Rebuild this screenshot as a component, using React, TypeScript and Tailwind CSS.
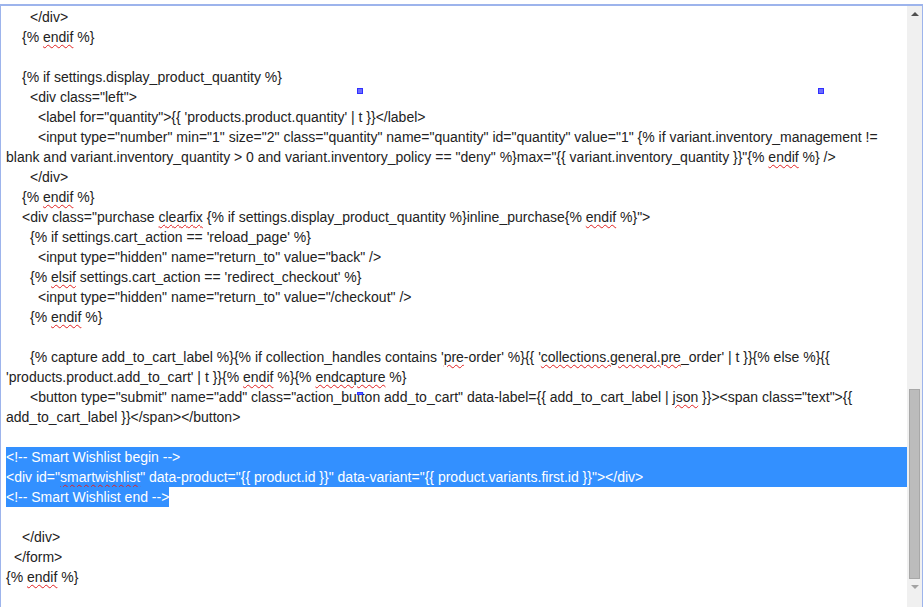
import React from "react";

const W = ({ children }: { children: React.ReactNode }) => (
  <span className="underline decoration-wavy decoration-[#e02020] decoration-1 underline-offset-2">{children}</span>
);

type L = { i: number; c?: React.ReactNode; sel?: "full" | "text" };

const lines: L[] = [
  { i: 30, c: "</div>" },
  { i: 22, c: <>{"{% "}<W>endif</W>{" %}"}</> },
  { i: 0 },
  { i: 22, c: "{% if settings.display_product_quantity %}" },
  { i: 30, c: '<div class="left">' },
  { i: 38, c: "<label for=\"quantity\">{{ 'products.product.quantity' | t }}</label>" },
  { i: 38, c: '<input type="number" min="1" size="2" class="quantity" name="quantity" id="quantity" value="1" {% if variant.inventory_management !=' },
  { i: 6, c: <>{'blank and variant.inventory_quantity > 0 and variant.inventory_policy == "deny" %}max="{{ variant.inventory_quantity }}"{% '}<W>endif</W>{" %} />"}</> },
  { i: 30, c: "</div>" },
  { i: 22, c: <>{"{% "}<W>endif</W>{" %}"}</> },
  { i: 22, c: <>{'<div class="purchase '}<W>clearfix</W>{' {% if settings.display_product_quantity %}inline_purchase{% '}<W>endif</W>{' %}">'}</> },
  { i: 30, c: "{% if settings.cart_action == 'reload_page' %}" },
  { i: 38, c: '<input type="hidden" name="return_to" value="back" />' },
  { i: 30, c: <>{"{% "}<W>elsif</W>{" settings.cart_action == 'redirect_checkout' %}"}</> },
  { i: 38, c: '<input type="hidden" name="return_to" value="/checkout" />' },
  { i: 30, c: <>{"{% "}<W>endif</W>{" %}"}</> },
  { i: 0 },
  { i: 30, c: <>{"{% capture add_to_cart_label %}{% if collection_handles contains '"}<W>pre</W>{"-order' %}{{ '"}<W>collections.general.pre</W>{"_order' | t }}{% else %}{{"}</> },
  { i: 6, c: <>{"'products.product.add_to_cart' | t }}{% "}<W>endif</W>{" %}{% "}<W>endcapture</W>{" %}"}</> },
  { i: 30, c: <>{'<button type="submit" name="add" class="action_button add_to_cart" data-label={{ add_to_cart_label | '}<W>json</W>{' }}><span class="text">{{'}</> },
  { i: 6, c: "add_to_cart_label }}</span></button>" },
  { i: 0 },
  { i: 6, c: "<!-- Smart Wishlist begin -->", sel: "full" },
  { i: 6, c: <>{'<div id="'}<W>smartwishlist</W>{'" data-product="{{ product.id }}" data-variant="{{ product.variants.first.id }}"></div>'}</>, sel: "full" },
  { i: 6, c: "<!-- Smart Wishlist end -->", sel: "text" },
  { i: 0 },
  { i: 22, c: "</div>" },
  { i: 14, c: "</form>" },
  { i: 6, c: <>{"{% "}<W>endif</W>{" %}"}</> },
];

export default function App() {
  return (
    <div className="w-[923px] h-[607px] bg-white pt-[4px] overflow-hidden" style={{ fontFamily: '"Liberation Sans", Arial, sans-serif' }}>
      <div className="relative flex h-[603px] border-t-[2px] border-l border-r border-[#9db4ec]">
        <div className="flex-1 pt-[1px] text-[14px] leading-[20px] text-[#222]">
          {lines.map((l, k) => (
            <div key={k} className="h-[20px] whitespace-pre" style={{ paddingLeft: l.sel === "full" ? 5 : l.sel ? 5 : Math.max(l.i - 1, 0) }}>
              {l.sel === "full" ? (
                <div className="-ml-[0px] bg-[#3390ff] text-white h-[20px]">{l.c}</div>
              ) : l.sel === "text" ? (
                <span className="inline-block bg-[#3390ff] text-white h-[20px]">{l.c}</span>
              ) : (
                l.c ?? "\u00a0"
              )}
            </div>
          ))}
        </div>
        <div className="w-[15px] bg-[#f0f0f0] flex flex-col items-center">
          <div className="h-[16px] flex items-center justify-center">
            <div className="w-0 h-0 border-l-[4px] border-r-[4px] border-b-[4px] border-l-transparent border-r-transparent border-b-[#505050]" />
          </div>
          <div className="mt-[367px] w-[11px] h-[190px] bg-[#bcbcbc] border border-[#a8a8a8]" />
          <div className="h-[16px] flex items-center justify-center">
            <div className="w-0 h-0 border-l-[4px] border-r-[4px] border-t-[4px] border-l-transparent border-r-transparent border-t-[#a3a3a3]" />
          </div>
        </div>
        <div className="absolute left-[356px] top-[82px] w-[6px] h-[6px] bg-[#6b6bff] border border-[#3030ff]" />
        <div className="absolute left-[817px] top-[82px] w-[6px] h-[6px] bg-[#6b6bff] border border-[#3030ff]" />
        <div className="absolute left-[356px] top-[386px] w-[6px] h-[3px] bg-[#6b6bff] border border-[#3030ff]" />
      </div>
    </div>
  );
}
